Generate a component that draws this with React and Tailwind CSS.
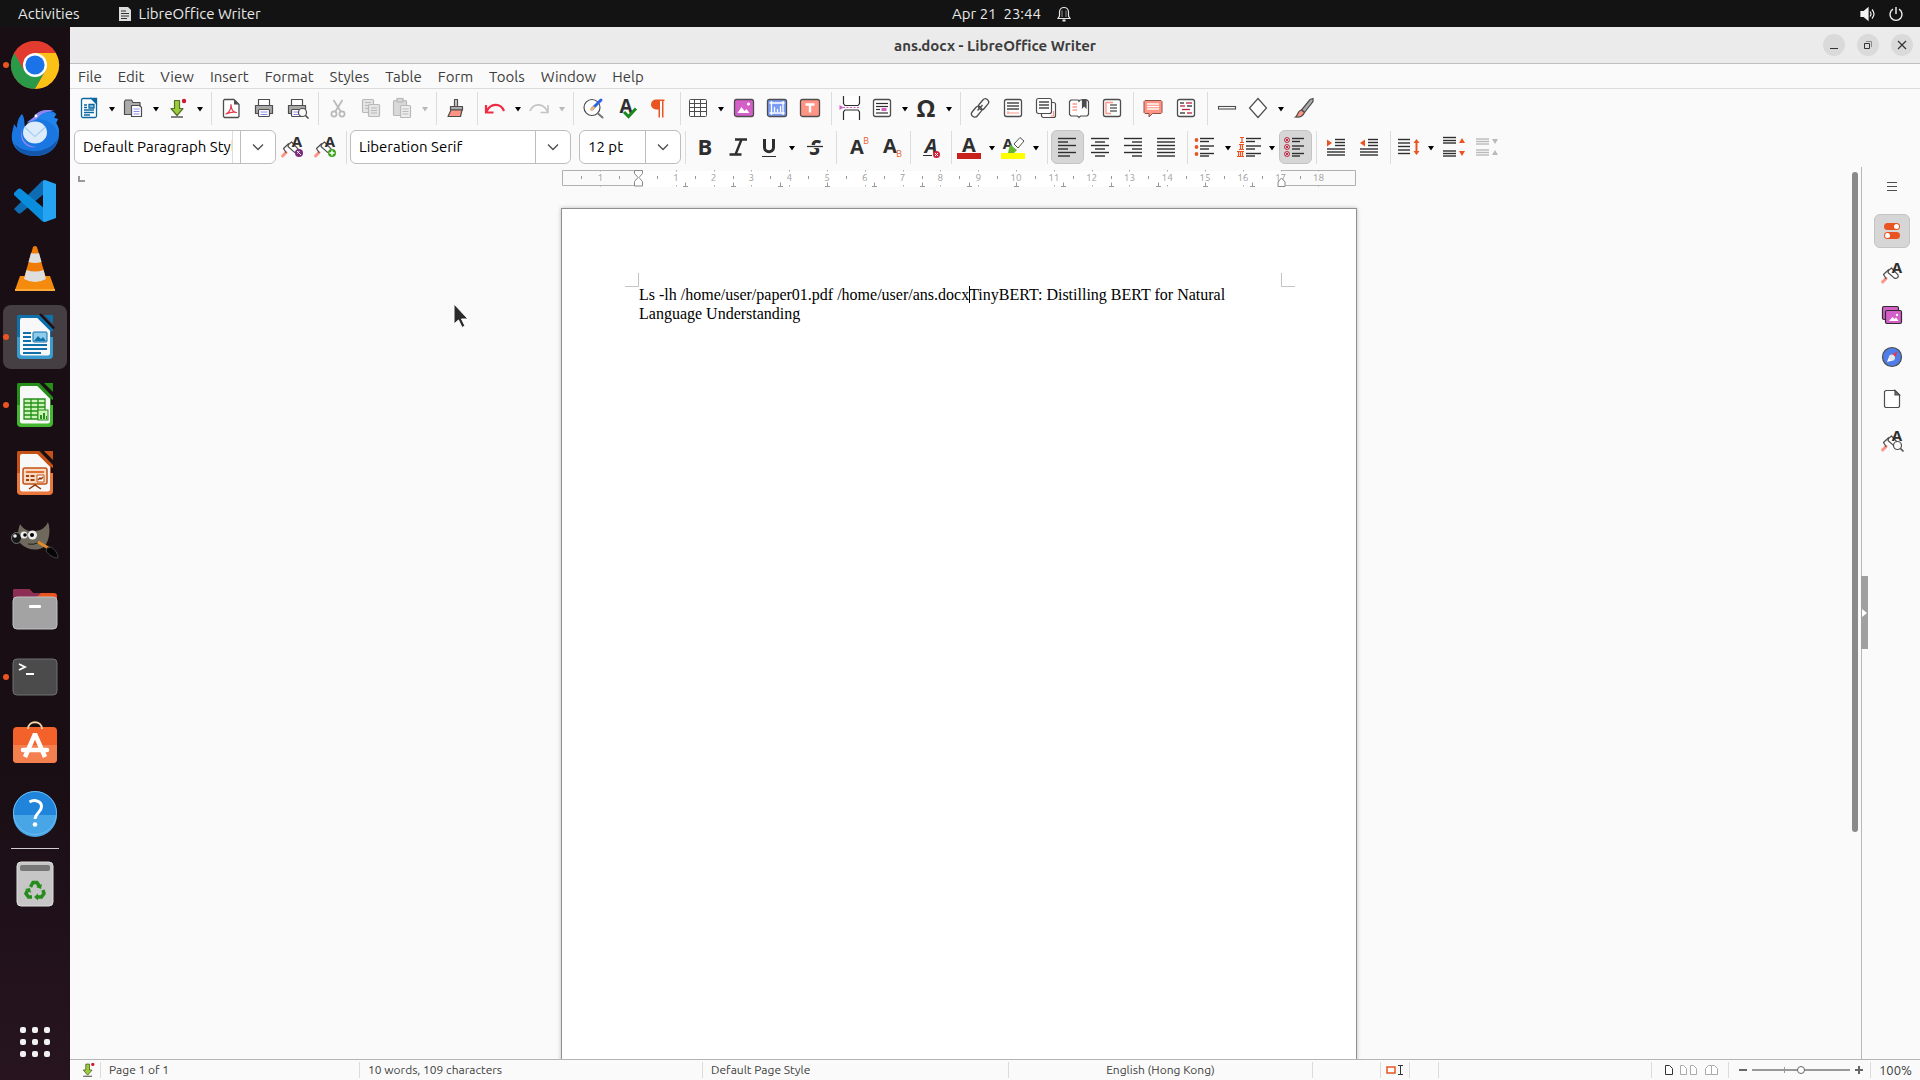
// src/App.jsx
import React, { useState } from 'react';

const MENUS = ['File', 'Edit', 'View', 'Insert', 'Format', 'Styles', 'Table', 'Form', 'Tools', 'Window', 'Help'];

const INK = '#4d4d4d';
const DARK = '#2e2e2e';
const ORANGE = '#e95420';
const SALMON = '#ff9484';
const PURPLE = '#d45fc9';
const DIM = '#b9b9b9';

function Letter({ x, y, size = 18, fill = DARK, italic, children }) {
  return (
    <text x={x} y={y} fontSize={size} fill={fill} fontWeight="bold" fontStyle={italic ? 'italic' : 'normal'} textAnchor="middle" fontFamily="Open Sans, Noto Sans, sans-serif">{children}</text>
  );
}

function Lines({ x1 = 3, x2 = 21, rows, color = DARK, width = 1.4 }) {
  return (
    <g stroke={color} strokeWidth={width}>
      {rows.map((r, i) => Array.isArray(r) ? <path key={i} d={`M${r[0]} ${r[2]}H${r[1]}`} /> : <path key={i} d={`M${x1} ${r}H${x2}`} />)}
    </g>
  );
}

const brushRoller = (
  <g fill="#fff" stroke={INK} strokeWidth="1.2" strokeLinejoin="round" strokeLinecap="round">
    <path d="M2.6 21 6 17.5" stroke={SALMON} strokeWidth="3" />
    <path d="M6 17.5 3.5 13.5 8.5 8.8 11 10" fill="none" />
    <path d="m8.5 9.5 3-2.5 6.500 6.800c1 2.500-1.500 4.200-3.700 3.300L8 11.500z" />
  </g>
);

const printer = (
  <g stroke={INK} strokeWidth="1.2" strokeLinejoin="round">
    <rect x="6.500" y="3.500" width="11" height="6" fill="#fff" />
    <path d="M3.500 9.500h17v8h-17z" fill="#a8a8a8" />
    <rect x="6.500" y="13.500" width="11" height="7" rx="1" fill="#fff" />
    <path d="M8.500 16h7M8.500 18.500h7" stroke="#8d8df0" />
  </g>
);

const magnifier = (
  <g stroke={INK} strokeWidth="1.200">
    <circle cx="17.500" cy="16.500" r="4" fill="#fafafa" />
    <path d="m20.500 19.500 3 3" strokeWidth="1.600" />
  </g>
);

const ICONS = {
  newDoc: (
    <g stroke="#0c69a0" strokeWidth="1.300" fill="none">
      <path d="M6 2.500h8.500l5 5V20a1.500 1.500 0 0 1-1.500 1.500H6A1.500 1.500 0 0 1 4.500 20V4A1.500 1.500 0 0 1 6 2.500z" fill="#fff" />
      <path d="M14.500 2.500h5v5z" fill="#0c69a0" />
      <path d="M7 9h3M7 11.500h3M7 14h10M7 16.500h10M7 19h6" />
      <path d="M12 8.500h5v3.500h-5z" fill="#7ec2e8" />
    </g>
  ),
  open: (
    <g stroke={INK} strokeWidth="1.200" strokeLinejoin="round">
      <path d="M3.500 18.500V5.500l1-1.500h6l1.500 2.500h7v12z" fill="#ababab" />
      <path d="M10.500 9.500h8l2 2v9h-10z" fill="#fff" />
      <path d="M12.500 13h6M12.500 15.500h6M12.500 18h6" stroke="#8d8df0" />
    </g>
  ),
  save: (
    <g>
      <path d="M9.500 4.500h5v8h3.500l-6 7-6-7h3.500z" fill="#9ccb3b" stroke="#56702a" strokeWidth="1.200" strokeLinejoin="round" />
      <path d="M6 21h12" stroke={INK} strokeWidth="1.400" />
      <circle cx="19" cy="5" r="2.200" fill="#d3172e" />
    </g>
  ),
  pdf: (
    <g fill="none" strokeLinejoin="round">
      <path d="M5.500 3.500h9.500l5 5v12l-1 1h-13.500l-1-1v-16z" fill="#fff" stroke={INK} strokeWidth="1.300" />
      <path d="M15 3.500l5 5h-5z" fill={INK} />
      <path d="M7 18c3-1.500 5-5 5-9.500 0 5 2 7.500 5.500 8-3-.700-7 0-10.500 1.500z" stroke="#e53950" strokeWidth="1.200" />
    </g>
  ),
  print: printer,
  preview: <g>{printer}{magnifier}</g>,
  cut: (
    <g stroke={DIM} strokeWidth="1.700" fill="none">
      <path d="M7.500 4 15 16M16.500 4 9 16" />
      <circle cx="8" cy="18" r="2.600" /><circle cx="16" cy="18" r="2.600" />
    </g>
  ),
  copy: (
    <g stroke={DIM} strokeWidth="1.200" fill="#e4e4e4">
      <rect x="3.500" y="3.500" width="11" height="13" rx="1" /><path d="M6 6.500h6M6 9.500h4M6 12.500h3" />
      <rect x="9.500" y="8.500" width="11" height="12" rx="1" /><path d="M12 12h6M12 14.500h6M12 17h6" />
    </g>
  ),
  paste: (
    <g stroke={DIM} strokeWidth="1.200" fill="#d9d9d9">
      <rect x="3.500" y="4.500" width="13" height="15" rx="1" /><rect x="7" y="2.500" width="6" height="3.500" />
      <rect x="10.500" y="9.500" width="10" height="12" rx="1" fill="#ececec" /><path d="M12.500 13h6M12.500 15.500h6M12.500 18h6" />
    </g>
  ),
  clone: (
    <g stroke={INK} strokeWidth="1.200" strokeLinejoin="round">
      <path d="M10.500 3.500h3v7h-3z" fill="#ccc" />
      <path d="M6.500 10.500h12v3.500h-12z" fill="#ababab" />
      <path d="M7 14h11l-1.500 6.500H4z" fill={SALMON} />
    </g>
  ),
  undo: <path d="M3 9v7.500h7.500M3.500 15.500c4-8.500 14-9 17.500-.500" fill="none" stroke="#ee2c45" strokeWidth="2.200" />,
  redo: <path d="M21 9v7.500h-7.500M20.500 15.500c-4-8.500-14-9-17.500-.500" fill="none" stroke="#c4c4c4" strokeWidth="1.600" />,
  find: (
    <g strokeLinecap="round">
      <circle cx="11" cy="11.500" r="8" fill="#fff" stroke={INK} strokeWidth="1.200" />
      <path d="m17 17.500 4.500 4" stroke="#777" strokeWidth="2" />
      <path d="M11 13 20 4" stroke="#2f62e0" strokeWidth="3" />
      <path d="m10.500 13.500 2-2" stroke="#f7b86a" strokeWidth="2.500" />
    </g>
  ),
  spell: <g><Letter x={12} y={17} size={19}>A</Letter><path d="m10 16 4.500 4.500 7.500-8" fill="none" stroke="#198a1f" strokeWidth="3" /></g>,
  pilcrow: <path d="M18.500 3.500H10a5 5 0 0 0 0 10h2.500v8h1.500v-16.500h2v16.500h1.500v-16.500h1z" fill={ORANGE} transform="translate(-1 0)" />,
  table: (
    <g stroke={INK} strokeWidth="1" fill="#fff">
      <rect x="3.500" y="3.500" width="17" height="17" rx="1" />
      <path d="M3.500 7.500h17M3.500 11.500h17M3.500 15.500h17M8.500 3.500v17M14.500 3.500v17" />
    </g>
  ),
  image: (
    <g>
      <rect x="2.500" y="3.500" width="19" height="17" rx="2" fill={PURPLE} stroke={INK} strokeWidth="1.300" />
      <path d="m5.500 17 4-6 3 4 2-2 3 4z" fill="#fff" /><circle cx="16.500" cy="8" r="1.600" fill="#fff" />
    </g>
  ),
  chart: (
    <g>
      <rect x="2.500" y="3.500" width="19" height="17" rx="2" fill="#7a9cf5" stroke={INK} strokeWidth="1.300" />
      <path d="M6.500 5v14M4.500 17h15M4.500 7h15M18 5v14M9.500 16v-5M12.500 16v-3M15.500 16v-6" stroke="#fff" strokeWidth="1.300" />
    </g>
  ),
  textBox: (
    <g>
      <rect x="2.500" y="3.500" width="19" height="17" rx="2" fill={SALMON} stroke={INK} strokeWidth="1.300" />
      <path d="M7.500 8.500h9M12 8.500v8" stroke="#fff" strokeWidth="2.400" />
    </g>
  ),
  pageBreak: (
    <g fill="#fff" stroke={DARK} strokeWidth="1.200">
      <path d="M4.500 0v7.500l1.500 2h13l1.500-2V0M4.500 24v-8l1.500-2h13l1.500 2v8" />
      <path d="M4 11.500h17" stroke={PURPLE} strokeDasharray="2 1.500" /><path d="m.500 9 4 2.500-4 2.500z" fill={PURPLE} stroke="none" />
    </g>
  ),
  field: (
    <g>
      <rect x="3.500" y="3.500" width="17" height="17" rx="2" fill="#fff" stroke={INK} strokeWidth="1.300" />
      <Lines rows={[[6, 18, 7.500], [6, 18, 10.500], [6, 10, 13.500], [6, 18, 17]]} width={1.200} />
      <path d="M11.500 12h5v3h-5z" fill={PURPLE} />
    </g>
  ),
  omega: <Letter x={12} y={21} size={24}>Ω</Letter>,
  link: (
    <g fill="none" stroke={INK} strokeWidth="1.300">
      <rect x="9.500" y="5" width="12" height="6.500" rx="3.200" transform="rotate(-50 15.500 8.200)" />
      <rect x="2.500" y="12.500" width="12" height="6.500" rx="3.200" transform="rotate(-50 8.500 15.700)" />
      <path d="m9.500 14.500 5-5.500" />
    </g>
  ),
  footnote: (
    <g>
      <rect x="3.500" y="3.500" width="17" height="17" rx="2" fill="#fff" stroke={INK} strokeWidth="1.300" />
      <Lines x1={6} x2={18} rows={[7, 10, 13]} width={1.300} /><path d="M7 15v3M6 17h12" stroke={SALMON} />
    </g>
  ),
  endnote: (
    <g fill="#fff" stroke={INK} strokeWidth="1.200">
      <rect x="7.500" y="6.500" width="14" height="15" rx="2" /><rect x="2.500" y="2.500" width="15" height="15" rx="2" />
      <Lines x1={5} x2={15} rows={[6, 9, 12]} width={1.300} /><path d="M19.500 15v5h-3" stroke={SALMON} fill="none" />
    </g>
  ),
  bookmark: (
    <g fill="#fff" stroke={INK} strokeWidth="1.200">
      <path d="M2.500 5.500 4 4h7l1 1.500L13 4h7l1.500 1.500v13L20 20h-6.500l-1.500 1.500-1.500-1.500H4l-1.500-1.500z" />
      <path d="M15.500 3.500h3.500v8l-1.700-2-1.800 2z" fill={INK} />
      <Lines x1={5.500} x2={10} rows={[8, 11, 14]} color={SALMON} />
    </g>
  ),
  crossRef: (
    <g>
      <rect x="3.500" y="3.500" width="17" height="17" rx="2" fill="#fff" stroke={INK} strokeWidth="1.300" />
      <Lines rows={[[10, 17, 9], [10, 17, 12], [10, 17, 15]]} width={1.100} /><path d="M13 6.500H6v11h5" fill="none" stroke={SALMON} strokeWidth="1.300" />
    </g>
  ),
  comment: (
    <g>
      <path d="M4 4.500h16l1 1v11l-1 1h-8.500l-3.500 3.500V17.500H4l-1-1v-11z" fill={SALMON} stroke="#8d5149" />
      <Lines x1={6} x2={18} rows={[8, 10.500, 13]} color="#fff" />
    </g>
  ),
  track: (
    <g>
      <rect x="3.500" y="3.500" width="17" height="17" rx="2" fill="#fff" stroke={INK} strokeWidth="1.300" />
      <Lines rows={[[6, 10, 7], [13, 18, 10], [6, 11, 17]]} width={1.300} /><Lines rows={[[12, 18, 7], [6, 11, 10], [8, 16, 13.500], [13, 18, 17]]} color="#c0203a" width={1.300} />
    </g>
  ),
  line: <rect x="3.500" y="10.500" width="17" height="2.500" fill="#fff" stroke={INK} strokeWidth="1.100" />,
  shape: <path d="m12 2.500 8.500 9.500-8.500 9.500L3.500 12z" fill="#fff" stroke={INK} strokeWidth="1.200" />,
  draw: (
    <g stroke={INK} strokeWidth="1.200">
      <path d="M9.500 14 18 3.500l3-1v3L12.500 16.500z" fill="#aaa" />
      <path d="M9.500 14l3 2.500c-1.500 3.500-5 5-9 4.500 2.500-1.500 2-6.500 6-7z" fill={SALMON} />
    </g>
  ),
  styleUpdate: <g>{brushRoller}<Letter x={17} y={12} size={15}>A</Letter><circle cx="19" cy="18" r="4" fill="#7b2a7e" /><path d="m17 16 4 4M17.500 18.500l2-2.500" stroke="#fff" /></g>,
  styleNew: <g>{brushRoller}<Letter x={17} y={12} size={15}>A</Letter><circle cx="19" cy="18" r="4" fill="#3fa01f" /><path d="M16.500 18h5M19 15.500v5" stroke="#fff" strokeWidth="1.400" /></g>,
  styles: <g>{brushRoller}<Letter x={17} y={12} size={15}>A</Letter></g>,
  inspector: <g>{brushRoller}<Letter x={17} y={12} size={15}>A</Letter>{magnifier}</g>,
  bold: <Letter x={12} y={20} size={22}>B</Letter>,
  italic: <path d="M9 4.500h12M3.500 19.500h12M15.500 4.500l-6 15" stroke={DARK} strokeWidth="2.400" />,
  underline: <g><path d="M7.500 4v8.500c0 5.500 9 5.500 9 0V4" stroke={DARK} strokeWidth="3" fill="none" /><path d="M5 21.500h14" stroke={DARK} /></g>,
  strike: <g><Letter x={12} y={19.500} size={21} italic>S</Letter><path d="M4 11.500h16" stroke="#fafafa" strokeWidth="3" /><path d="M4 11.500h16" stroke={DARK} strokeWidth="1.300" /></g>,
  superscript: <g><Letter x={13} y={19} size={20}>A</Letter><text x="22" y="9" fontSize="9" fill={ORANGE} textAnchor="middle">B</text></g>,
  subscript: <g><Letter x={13} y={18} size={20}>A</Letter><text x="22" y="22" fontSize="9" fill={ORANGE} textAnchor="middle">B</text></g>,
  clear: <g><Letter x={13} y={18} size={20} italic>A</Letter><path d="M5 20.500h9" stroke={DARK} /><circle cx="18.500" cy="19.500" r="3.500" fill="#d3213c" /><path d="m17 18 3 3m0-3-3 3" stroke="#fff" /></g>,
  fontColor: <g><Letter x={12} y={17} size={20}>A</Letter><path d="M0 18h24v6H0z" fill="#c9211e" /></g>,
  highlight: (
    <g>
      <Letter x={7} y={14} size={15}>A</Letter>
      <path d="m13 9 6-6.500 4 3.500-6 7z" fill="#fff" stroke={INK} /><path d="m9 9.500 7 5.500-3 3H7z" fill="#69b52d" />
      <path d="M0 18h24v6H0z" fill="#ff0" />
    </g>
  ),
  left: <Lines rows={[[3, 21, 3.500], [3, 13, 7], [3, 21, 10.500], [3, 13, 14], [3, 21, 17.500], [3, 15, 21]]} />,
  center: <Lines rows={[[3, 21, 3.500], [7, 17, 7], [3, 21, 10.500], [7, 17, 14], [3, 21, 17.500], [7, 17, 21]]} />,
  right: <Lines rows={[[3, 21, 3.500], [11, 21, 7], [3, 21, 10.500], [11, 21, 14], [3, 21, 17.500], [11, 21, 21]]} />,
  justify: <Lines rows={[3.500, 7, 10.500, 14, 17.500, 21]} />,
  bullets: (
    <g fill={ORANGE}>
      <Lines rows={[[7, 21, 3.500], [7, 16, 6.500], [7, 21, 11], [7, 16, 14], [7, 21, 18.500], [7, 16, 21]]} />
      <circle cx="3.500" cy="5" r="1.900" /><circle cx="3.500" cy="12" r="1.900" /><circle cx="3.500" cy="19" r="1.900" />
    </g>
  ),
  numbers: (
    <g>
      <Lines rows={[[9, 24, 3.500], [9, 18, 6.500], [9, 24, 11], [9, 18, 14], [9, 24, 18.500], [9, 18, 21]]} />
      <path d="M3 2.500h4M3 7.500h4M5 2.500v5M2 9.500h5M2 14.500h5M3.500 9.500v5M5.500 9.500v5M0 16.500h7M0 21.500h7M1.500 16.500v5M3.500 16.500v5M5.500 16.500v5" stroke={ORANGE} strokeWidth="1.200" />
    </g>
  ),
  noList: (
    <g fill="none">
      <Lines rows={[[9, 21, 3.500], [9, 17, 6.500], [9, 21, 11], [9, 17, 14], [9, 21, 18.500], [9, 17, 21]]} />
      <g stroke="#c0304a"><circle cx="4" cy="5" r="2.500" /><circle cx="4" cy="12" r="2.500" /><circle cx="4" cy="19" r="2.500" /><path d="m2.500 3.500 3 3m0-3-3 3m0 4 3 3m0-3-3 3m0 4 3 3m0-3-3 3" /></g>
    </g>
  ),
  indentMore: <g><Lines rows={[[11, 21, 4.500], [11, 21, 7.500], [11, 21, 10.500], [3, 21, 14], [3, 21, 17], [3, 21, 20]]} /><path d="m3 4.500 5 3.500-5 3.500z" fill={ORANGE} /></g>,
  indentLess: <g><Lines rows={[[11, 21, 4.500], [11, 21, 7.500], [11, 21, 10.500], [3, 21, 14], [3, 21, 17], [3, 21, 20]]} /><path d="m8 4.500-5 3.500 5 3.500z" fill={ORANGE} /></g>,
  spacing: <g><Lines x1={2} x2={14} rows={[4.500, 8, 11.500, 15, 18.500]} /><path d="m20.500 4-3 4h2v8h-2l3 4 3-4h-2V8h2z" fill={ORANGE} /></g>,
  spaceMore: <g><Lines x1={1} x2={14} rows={[2.500, 5.500, 8, 16, 18.500, 21]} /><path d="m20 3-3 5h6zM20 21l-3-5h6z" fill={ORANGE} /></g>,
  spaceLess: <g><Lines x1={1} x2={14} rows={[4, 6.500, 9, 15, 17.500, 20]} color={DIM} /><path d="m20 9-3-5h6zM20 15l-3 5h6z" fill={DIM} /></g>,
  hamburger: <Lines x1={7} x2={17} rows={[7.500, 11.500, 15.500]} color={INK} width={1} />,
  properties: (
    <g>
      <rect x="4" y="4" width="16" height="7" rx="3.500" fill={ORANGE} /><circle cx="16.500" cy="7.500" r="2.500" fill="#fff" />
      <rect x="4" y="13" width="16" height="7" rx="3.500" fill={ORANGE} /><circle cx="7.500" cy="16.500" r="2.500" fill="#fff" />
    </g>
  ),
  gallery: (
    <g stroke={DARK} strokeWidth="1.200">
      <rect x="2.500" y="3.500" width="16" height="13" rx="1.500" fill={PURPLE} /><rect x="5.500" y="7.500" width="16" height="13" rx="1.500" fill={PURPLE} />
      <path d="m9 18 3.500-4 2 2 1.500-1.500 2.500 3.500z" fill="#fff" stroke="none" /><circle cx="17" cy="12" r="1.200" fill="#fff" stroke="none" />
    </g>
  ),
  navigator: (
    <g>
      <circle cx="12" cy="12" r="9.500" fill="#4f7de9" stroke={INK} strokeWidth="1.200" />
      <path d="m7 17 2.500-6.500 5 4.500z" fill="#fff" /><circle cx="12" cy="12.500" r="3" fill="#e4e4ea" /><path d="m17.500 6.500-5 2.500 3 3z" fill="#e53950" />
    </g>
  ),
  page: <g stroke={INK} strokeWidth="1.200"><path d="M6 3.500h9l4.500 4.500v11.500l-1 1H5.500l-1-1V4.500z" fill="#fff" /><path d="M15 3.500V8h4.500z" fill="#777" /></g>,
};

function Icon({ name }) {
  return <svg viewBox="0 0 24 24" className="w-6 h-6 shrink-0 overflow-visible" aria-hidden="true">{ICONS[name]}</svg>;
}

// items: 'name' is a plain button, 'name+' has a drop-down arrow, '|' is a separator
const STANDARD = ['newDoc+', 'open+', 'save+', '|', 'pdf', 'print', 'preview', '|', 'cut', 'copy', 'paste+', '|', 'clone', '|', 'undo+', 'redo+', '|', 'find', 'spell', 'pilcrow', '|', 'table+', 'image', 'chart', 'textBox', '|', 'pageBreak', 'field+', 'omega+', '|', 'link', 'footnote', 'endnote', 'bookmark', 'crossRef', '|', 'comment', 'track', '|', 'line', 'shape+', 'draw'];
const FORMATTING = ['|', 'bold', 'italic', 'underline+', 'strike', '|', 'superscript', 'subscript', '|', 'clear', '|', 'fontColor+', 'highlight+', '|', 'left', 'center', 'right', 'justify', '|', 'bullets+', 'numbers+', 'noList', '|', 'indentMore', 'indentLess', '|', 'spacing+', 'spaceMore', 'spaceLess'];
const PRESSED = ['left', 'noList'];
const DISABLED = ['paste', 'redo'];

function Separator() {
  return <span className="flex w-2 h-[33px] shrink-0 justify-center"><span className="w-px bg-[#dcdcdc]" /></span>;
}

function ToolItems({ items }) {
  return items.map((item, i) => {
    if (item === '|') return <Separator key={i} />;
    const drop = item.endsWith('+');
    const name = item.replace('+', '');
    if (!drop) {
      return (
        <button key={i} type="button" aria-label={name} className={`flex items-center w-[33px] h-[34px] shrink-0 rounded-md ${PRESSED.includes(name) ? 'pl-[3px] border border-[#c4c4c4] bg-[#d6d6d6]' : 'pl-1'}`}>
          <Icon name={name} />
        </button>
      );
    }
    return (
      <React.Fragment key={i}>
        <button type="button" aria-label={name} className="flex items-center w-[29px] h-[34px] shrink-0 pl-[2px]"><Icon name={name} /></button>
        <button type="button" aria-label={`${name} options`} className="flex items-center w-[15px] h-[34px] shrink-0 pl-1 pt-[3px]">
          <svg viewBox="0 0 8 5" className="w-[8px] h-[5px]"><path d="M1 0h6L4 4.500z" fill={DISABLED.includes(name) ? DIM : '#000'} /></svg>
        </button>
      </React.Fragment>
    );
  });
}

function Combo({ label, initial, className, inner }) {
  const [value, setValue] = useState(initial);
  return (
    <div className={`flex h-[34px] shrink-0 rounded-md border border-[#bdbdbd] bg-white overflow-hidden ${className}`}>
      <div className="flex flex-1 min-w-0">
        <input aria-label={label} value={value} onChange={e => setValue(e.target.value)} className={`w-full min-w-0 pl-2 text-[15px] text-black outline-none ${inner ? 'mr-[7px] border-r border-[#dcdcdc]' : ''}`} />
      </div>
      <button type="button" aria-label={`${label} list`} className="flex items-center justify-center w-[35px] border-l border-[#bdbdbd]">
        <svg viewBox="0 0 12 8" className="w-3 h-2"><path d="m1 1.500 5 5 5-5" fill="none" stroke={INK} strokeWidth="1.300" /></svg>
      </button>
    </div>
  );
}

function OfficeDoc({ dark, light, children }) {
  return (
    <g>
      <path d="M7 2h22l11 11v29a3 3 0 0 1-3 3H9a3 3 0 0 1-3-3V4a2 2 0 0 1 1-2z" fill={dark} />
      <path d="M6 24h36v18a4 4 0 0 1-4 4H10a4 4 0 0 1-4-4z" fill={light} />
      <path d="M11 5h15.500L39 17.500V40a2.500 2.500 0 0 1-2.500 2.500h-25A2.500 2.500 0 0 1 9 40V7a2 2 0 0 1 2-2z" fill="#f8f8f8" />
      <path d="M26.500 5 39 17.500 42 19V15L30 2h-4z" fill={dark} />
      <path d="M29 1 43 15.500" stroke="#1b1016" strokeWidth="2.500" />
      <path d="M33 2h9v9z" fill={dark} />
      {children}
    </g>
  );
}

const DOCK = [
  {
    name: 'Google Chrome', running: true, art: (
      <g>
        <circle cx="24" cy="24" r="24" fill="#e33b2e" />
        <path d="M3.200 12A24 24 0 0 0 24 48l10.400-18L24 24z" fill="#2a9a48" />
        <path d="M44.800 12H24l10.400 18L24 48A24 24 0 0 0 44.800 12z" fill="#fbc116" />
        <path d="M3.200 12A24 24 0 0 1 44.800 12H24L13.600 30z" fill="#e33b2e" />
        <circle cx="24" cy="24" r="12" fill="#fff" /><circle cx="24" cy="24" r="9.600" fill="#1a73e8" />
      </g>
    ),
  },
  {
    name: 'Thunderbird', art: (
      <g>
        <path d="M2 20C-3 36 8 47 24 47c14 0 24-9 24-22 0-6-1-8-3-11l2-4-4-1 2-4c-3-5-18-5-22 3l-7 5 6 2-8 3C13 14 14 9 11 5 7 9 6 14 6 19l-3-4z" fill="#1a77e2" />
        <path d="M23 8C27 0 38 0 44 2c-7 0-14 2-18 8l-10 4z" fill="#8f86f2" />
        <path d="M26 10C31 3 38 3 45 5l-2 4 4 1-2 4c2 3 3 6 3 11-4-10-12-15-22-15z" fill="#2184ec" />
        <path d="M3 34c8 10 32 13 44-4-3 11-12 17-23 17S6 42 3 34z" fill="#1457aa" />
        <path d="M11 19c-2 11 4 18 14 19-9 2-18-6-14-19z" fill="#8f86f2" />
        <ellipse cx="24" cy="23.500" rx="12" ry="11" fill="#dcecfb" /><path d="m13 17 11 10 11-10-2 3-9 8-9-8z" fill="#8ebfee" />
        <circle cx="25" cy="7" r="1.400" fill="#fff" />
      </g>
    ),
  },
  {
    name: 'Visual Studio Code', art: (
      <g>
        <path d="m3 32 4 4q1 1 3 0L34 16V3q-2 0-3 1z" fill="#0e6cb3" />
        <path d="m3 16 4-4q1-1 3 0l24 20v13q-2 0-3-1L3 18z" fill="#0a8ddc" />
        <path d="M34 3 45 7v34l-11 4-2-1V4z" fill="#25a4f3" />
      </g>
    ),
  },
  {
    name: 'VLC', art: (
      <g>
        <path d="M9 31h30l5 14q0 1-1 1H5q-1 0-1-1z" fill="#f58b0e" /><path d="M4 44h40v2H4z" fill="#ffa93a" />
        <path d="M22 2q2-2 4 0l9 31q-11 6-22 0z" fill="#f07c07" />
        <path d="m20 8-2.500 9q6.500 2 13 0L28 8q-4 1-8 0zM15.500 25l-2.500 9q11 6 22 0l-2.500-9q-8.500 3-17 0z" fill="#dedede" />
      </g>
    ),
  },
  {
    name: 'LibreOffice Writer', running: true, active: true, art: (
      <OfficeDoc dark="#0e71ab" light="#3a9bcf">
        <path d="M12 20h8M12 24h8M12 28h8M12 32h24M12 36h24M12 40h18" stroke="#0f70aa" strokeWidth="2" />
        <rect x="22" y="19" width="14" height="10" rx="1" fill="#8fcbea" stroke="#0f70aa" /><path d="m23 28 4-5 3 3 2-2 3 4z" fill="#0f70aa" />
      </OfficeDoc>
    ),
  },
  {
    name: 'LibreOffice Calc', running: true, art: (
      <OfficeDoc dark="#258f1a" light="#45b62f">
        <path d="M13 18h21v20H13zM13 22h21M13 26h21M13 30h21M13 34h21M20 18v20M27 18v20" fill="#ccf4b7" stroke="#258f1a" strokeWidth="1.300" />
        <rect x="27" y="29" width="10" height="10" fill="#ccf4b7" stroke="#258f1a" /><path d="M29 38v-4h2v4zM32 38v-6h2v6zM35 38v-3h1v3z" fill="#258f1a" />
      </OfficeDoc>
    ),
  },
  {
    name: 'LibreOffice Impress', art: (
      <OfficeDoc dark="#c45115" light="#e8783b">
        <rect x="12" y="19" width="24" height="16" rx="2" fill="#f9dac5" stroke="#c45115" strokeWidth="1.500" />
        <path d="M15 23h18" stroke="#e07030" strokeWidth="2" /><path d="M15 27h3M19.500 27h4M15 31h3M19.500 31h4" stroke="#a33f0b" strokeWidth="2" />
        <path d="M26 26h7v7h-7z" fill="#fff" stroke="#c45115" /><path d="m27 31 2-2 1 1 2-2M24 35v2M18 40l6-4 6 4" stroke="#8f3707" strokeWidth="1.500" fill="none" />
      </OfficeDoc>
    ),
  },
  {
    name: 'GIMP', art: (
      <g>
        <path d="M9 7c4 6 9 8 15 7 6 0 11-4 13-9 3 9 1 18-3 24-7 6-18 4-24-2-5-4-3-14-1-20z" fill="#6e695c" />
        <ellipse cx="5.500" cy="21" rx="5" ry="5.500" fill="#161616" stroke="#777" /><circle cx="4" cy="19" r="1.800" fill="#eee" />
        <circle cx="13" cy="18" r="3.500" fill="#eee" /><circle cx="21.500" cy="18" r="4.500" fill="#eee" /><circle cx="14" cy="18" r="1.800" /><circle cx="21" cy="18" r="2" />
        <path d="M17 27q5 1 10-1" stroke="#222" fill="none" /><path d="m27 25 12 7" stroke="#e38b26" strokeWidth="3" /><path d="m36 31 4-1c4 3 7 6 7 11-5 0-9-3-12-7z" fill="#050505" stroke="#444" />
      </g>
    ),
  },
  {
    name: 'Files', art: (
      <g>
        <path d="M4 4h14l4 4h21q3 0 3 3v9H2V7q0-3 2-3z" fill={ORANGE} /><path d="M4 4h14l4 4h8L18 20H2V7q0-3 2-3z" fill="#8d2f55" />
        <rect x="2" y="12" width="44" height="32" rx="4" fill="#a3a3a3" stroke="#c2c2c2" /><rect x="18" y="20" width="12" height="3" rx="1" fill="#fff" />
      </g>
    ),
  },
  {
    name: 'Terminal', running: true, art: (
      <g>
        <rect x="2" y="6" width="44" height="36" rx="4" fill="#4b4b4b" stroke="#707070" />
        <path d="m8 11 6 3-6 3M15 21h8" stroke="#fff" strokeWidth="1.800" fill="none" />
      </g>
    ),
  },
  {
    name: 'Ubuntu Software', art: (
      <g>
        <rect x="2" y="6" width="44" height="36" rx="4" fill="#f2622a" /><path d="M2 24h44v14a4 4 0 0 1-4 4H6a4 4 0 0 1-4-4z" fill="#f47f4f" />
        <path d="M17 8c0-9 14-9 14 0" fill="none" stroke="#f9d3a3" strokeWidth="1.800" />
        <path d="M14 36 24 13l10 23" stroke="#fff" strokeWidth="4.500" fill="none" strokeLinejoin="bevel" />
        <path d="M12 29h24" stroke="#fff" strokeWidth="4.500" strokeLinecap="round" />
      </g>
    ),
  },
  {
    name: 'Help', art: (
      <g>
        <circle cx="24" cy="24" r="22" fill="#1f84da" /><path d="M2 26a22 22 0 0 0 44 0z" fill="#49a6e6" /><circle cx="24" cy="24" r="21.500" fill="none" stroke="#6bbcf0" />
        <path d="M18.500 13c5-3 12-1 12 4.500 0 6-6.500 6.500-6.500 12.500" stroke="#fff" strokeWidth="3" fill="none" /><circle cx="24" cy="35.500" r="2.300" fill="#fff" />
      </g>
    ),
  },
];

function DockItem({ item }) {
  return (
    <button type="button" aria-label={item.name} className={`relative flex items-center justify-center w-16 h-16 shrink-0 rounded-lg ${item.active ? 'bg-[#453e43]' : ''}`}>
      {item.running && <span className="absolute left-0 top-[29px] w-[6px] h-[6px] rounded-full bg-[#e95420]" />}
      <svg viewBox="0 0 48 48" className="w-12 h-12 overflow-visible" aria-hidden="true">{item.art}</svg>
    </button>
  );
}

const TRASH = {
  name: 'Trash', art: (
    <g>
      <rect x="6" y="2" width="36" height="44" rx="4" fill="#c6c6c6" stroke="#dedede" /><rect x="9" y="5" width="30" height="6" rx="2" fill="#777" />
      <g fill="none" stroke="#268c1c" strokeWidth="3.500">
        <path d="m19.500 27 2.500-4.500h4l2.500 4M32 30l1 3.500-2.500 3.500H27M21 37h-3.500l-2.500-3.500 1.500-3" />
      </g>
      <path d="m31 24-1 5-5-2zM27 33.500v7l-4-3.500zM14 29l5-1 1 5z" fill="#268c1c" />
    </g>
  ),
};

function Dock() {
  return (
    <nav aria-label="Dock" className="flex flex-col items-center w-[70px] shrink-0 pt-[6px] pb-[6px] bg-linear-to-b from-[#190e14] from-70% to-[#27141f]">
      <div className="flex flex-col gap-1">{DOCK.map(item => <DockItem key={item.name} item={item} />)}</div>
      <hr className="w-12 mt-[3px] mb-[3px] border-t border-[#d0cdce]" />
      <DockItem item={TRASH} />
      <button type="button" aria-label="Show Applications" className="grid grid-cols-3 gap-[6px] p-[17px] mt-auto">
        {Array.from({ length: 9 }, (_, i) => <span key={i} className="w-[6px] h-[6px] rounded-[2px] bg-[#f2f2f2]" />)}
      </button>
    </nav>
  );
}

function TopBar() {
  return (
    <header className="grid grid-cols-[952fr_968fr] items-center h-[27px] shrink-0 bg-[#131313] text-[#e8e8e8] text-[15px] leading-5">
      <div className="flex items-center gap-2 pl-[18px]">
        <button type="button" className="mr-[31px]">Activities</button>
        <svg viewBox="0 0 12 14" className="w-3 h-[14px]"><path d="M0 0h9l3 3v11H0z" fill="#ddd" /><path d="M2 4h5M2 6.500h8M2 9h8M2 11.500h6" stroke="#333" /></svg>
        <button type="button">LibreOffice Writer</button>
      </div>
      <div className="flex items-center justify-between pr-4">
        <button type="button" className="flex items-center gap-4 whitespace-pre">
          Apr 21  23:44
          <svg viewBox="0 0 14 16" className="w-[14px] h-4" fill="none" stroke="#e8e8e8" strokeWidth="1.200"><path d="M1 12.500h12L11.500 10V6c0-6-9-6-9 0v4z" /><path d="M5 4.500v6.500M9 4.500v6.500" strokeWidth=".600" /><path d="M5.500 14.500h3" strokeWidth="2" /></svg>
        </button>
        <button type="button" aria-label="System menu" className="flex items-center gap-3">
          <svg viewBox="0 0 16 16" className="w-4 h-4" fill="none" stroke="#f2f2f2" strokeWidth="1.200"><path d="M1 5.500h3L8 2v12l-4-3.500H1z" fill="#f2f2f2" /><path d="M10 5.500q2 2.500 0 5M12 3.500q4 4.500 0 9" /></svg>
          <svg viewBox="0 0 16 16" className="w-4 h-4" fill="none" stroke="#f2f2f2" strokeWidth="1.400"><path d="M5 3.200a6 6 0 1 0 6 0M8 1v7" /></svg>
        </button>
      </div>
    </header>
  );
}

function TitleBar() {
  const round = 'flex items-center justify-center w-[22px] h-[22px] rounded-full bg-[#dadada]';
  return (
    <div className="grid grid-cols-[1fr_auto_1fr] items-center h-[37px] shrink-0 bg-[#ebebeb] border-b border-[#bfbfbf]">
      <span />
      <h1 className="pt-[2px] text-[15px] leading-5 font-bold text-[#3d3d3d]">ans.docx - LibreOffice Writer</h1>
      <div className="flex justify-end gap-3 pr-[7px]">
        <button type="button" aria-label="Minimize" className={round}><svg viewBox="0 0 10 10" className="w-[10px] h-[10px]"><path d="M1 8.500h8" stroke="#333" /></svg></button>
        <button type="button" aria-label="Restore" className={round}><svg viewBox="0 0 10 10" className="w-[10px] h-[10px]" fill="none"><path d="M3 1.500h5.500V7" stroke="#888" /><path d="M1.500 3.500h5v5h-5z" stroke="#333" /></svg></button>
        <button type="button" aria-label="Close" className={round}><svg viewBox="0 0 10 10" className="w-[10px] h-[10px]"><path d="m1 1 8 8m0-8L1 9" stroke="#333" strokeWidth="1.200" /></svg></button>
      </div>
    </div>
  );
}

const CM = 37.8;
const ZERO = 77;

function Ruler() {
  const halves = Array.from({ length: 40 }, (_, i) => (i - 3) / 2).filter(n => n !== 0 && n < 19);
  return (
    <svg viewBox="0 0 796 18" className="w-[796px] h-[18px] overflow-visible" aria-label="Ruler">
      <rect x={ZERO} y="1" width={17 * CM} height="16" fill="#fff" />
      <path d="M77.500 .500h-76v15h76M720.500 .500h74v15h-74" fill="none" stroke="#b0b0b0" />
      {halves.map(n => Number.isInteger(n) ? (
        <g key={n}>
          <text x={ZERO + n * CM} y="11" fontSize="10" textAnchor="middle" fill="#a0a0a0">{Math.abs(n)}</text>
          <path d={`M${Math.round(ZERO + n * CM)}.500 0v1.500M${Math.round(ZERO + n * CM)}.500 15v1.500`} stroke="#aaa" />
        </g>
      ) : <path key={n} d={`M${Math.round(ZERO + n * CM)}.500 6v3`} stroke="#999" />)}
      {Array.from({ length: 13 }, (_, i) => <path key={i} d={`M${Math.round(ZERO + (i + 1) * 1.25 * CM) - 2} 16.500h5m-2.500 0v-4`} stroke="#999" fill="none" />)}
      <path d="M73.500 .500h8v3l-3.500 4 3.500 4v4.500h-8v-4.500l3.500-4-3.500-4z" fill="#fff" stroke="#888" />
      <path d="M720.500 8l3.500 4v4.500h-7V12z" fill="#fff" stroke="#888" />
    </svg>
  );
}

function Document() {
  return (
    <main className="relative flex-1 min-w-0 min-h-0 overflow-hidden pt-[3px]">
      <div className="grid grid-cols-[1fr_auto_1fr]">
        <span className="w-[7px] h-[6px] ml-2 mt-[6px] border-l-2 border-b-2 border-[#999]" />
        <Ruler />
        <span />
      </div>
      <article className="relative mx-auto mt-5 w-[796px] h-[1123px] bg-white border border-[#8f8f8f] py-[76px] pl-[77px] pr-[75px] shadow-[0_0_4px_rgba(0,0,0,0.25)]">
        <span className="absolute left-[63px] top-16 w-[14px] h-[14px] border-r border-b border-[#c4c4c4]" />
        <span className="absolute right-[61px] top-16 w-[14px] h-[14px] border-l border-b border-[#c4c4c4]" />
        <p className="font-['Liberation_Serif',serif] text-[16px] leading-[19px] text-black">
          <span>Ls -lh /home/user/paper01.pdf /home/user/ans.docx</span><span className="inline-block w-px h-[17px] -mr-px align-text-bottom bg-black" /><span>TinyBERT: Distilling BERT for Natural</span><br />
          <span>Language Understanding</span>
        </p>
      </article>
      <svg viewBox="0 0 16 26" className="absolute left-[383px] top-[136px] w-4 h-[26px]" aria-hidden="true">
        <path d="M1 1v20l4.500-4 3.500 7.500 3-1.500-3.500-7H15z" fill="#2b2b2b" stroke="#fff" />
      </svg>
    </main>
  );
}

function Sidebar() {
  const decks = ['properties', 'styles', 'gallery', 'navigator', 'page', 'inspector'];
  const [deck, setDeck] = useState('properties');
  return (
    <aside className="relative flex flex-col items-center gap-2 w-[59px] shrink-0 border-l border-[#b8b8b8] pt-[3px] pl-[2px]">
      <button type="button" aria-label="Sidebar settings" className="flex items-center justify-center w-9 h-[34px] mb-[2px]"><Icon name="hamburger" /></button>
      {decks.map(d => (
        <button key={d} type="button" aria-label={d} onClick={() => setDeck(d)} className={`flex items-center justify-center w-9 h-[34px] rounded-md border ${deck === d ? 'bg-[#d6d6d6] border-[#c4c4c4]' : 'border-transparent'}`}><Icon name={d} /></button>
      ))}
      <button type="button" aria-label="Hide sidebar" className="absolute -left-px top-[409px] flex items-center w-[7px] h-[73px] bg-[#a0a0a0]">
        <svg viewBox="0 0 7 8" className="w-[7px] h-2"><path d="m1 0 5 4-5 4z" fill="#fff" /></svg>
      </button>
    </aside>
  );
}

function StatusBar() {
  const [zoom, setZoom] = useState(100);
  const cell = 'flex items-center h-4 shrink-0 border-r border-[#dcdcdc]';
  return (
    <footer className="flex items-center h-[21px] shrink-0 border-t border-[#b4b4b4] text-[12px] leading-4 text-[#3d3d3d]">
      <div className={`${cell} w-[31px] pl-[11px]`}><svg viewBox="3 3 19 19" className="w-[14px] h-[14px]">{ICONS.save}</svg></div>
      <div className={`${cell} w-[259px] pl-2`}>Page 1 of 1</div>
      <div className={`${cell} w-[343px] pl-2`}>10 words, 109 characters</div>
      <div className={`${cell} w-[306px] pl-2`}>Default Page Style</div>
      <div className={`${cell} w-[304px] justify-center`}>English (Hong Kong)</div>
      <div className={`${cell} w-[68px]`} />
      <div className={`${cell} w-[29px] justify-center`}>
        <svg viewBox="0 0 18 10" className="w-[18px] h-[10px]" fill="none"><rect x="1" y="2" width="8" height="6" stroke={ORANGE} strokeWidth="1.500" /><path d="M12 .500h5M12 9.500h5M14.500 .500v9" stroke="#333" /></svg>
      </div>
      <div className={`${cell} w-[29px]`} />
      <div className={`${cell} grow`} />
      <div className={`${cell} w-[77px] pl-3`}>
        <svg viewBox="0 0 56 12" className="w-14 h-3" fill="#fff">
          <path d="M1.500 1.500h4l3 3v6h-7z" stroke="#333" />
          <path d="M16.500 1.500h3l3 3v6h-6zM26.500 1.500h3l3 3v6h-6zM47.500 10.500v-9h3l3 3v6zh-6v-6l3-3h3" stroke="#aaa" />
        </svg>
      </div>
      <div className={`${cell} w-[142px] pl-[10px] gap-[5px]`}>
        <button type="button" aria-label="Zoom out" className="w-2 h-[2px] bg-[#666]" />
        <div className="relative flex items-center">
          <span className="absolute left-8 w-px h-[6px] bg-[#999]" />
          <input type="range" aria-label="Zoom" min="50" max="150" value={zoom} onChange={e => setZoom(Number(e.target.value))} className="relative w-[98px] h-3 appearance-none bg-transparent [&::-webkit-slider-runnable-track]:h-[2px] [&::-webkit-slider-runnable-track]:bg-[#999] [&::-webkit-slider-thumb]:appearance-none [&::-webkit-slider-thumb]:w-2 [&::-webkit-slider-thumb]:h-2 [&::-webkit-slider-thumb]:-mt-[3px] [&::-webkit-slider-thumb]:rounded-full [&::-webkit-slider-thumb]:border [&::-webkit-slider-thumb]:border-[#666] [&::-webkit-slider-thumb]:bg-white" />
        </div>
        <button type="button" aria-label="Zoom in"><svg viewBox="0 0 8 8" className="w-2 h-2"><path d="M0 4h8M4 0v8" stroke="#666" strokeWidth="2" /></svg></button>
      </div>
      <div className="w-[49px] pl-2 shrink-0 text-[13px]">100%</div>
    </footer>
  );
}

export default function App() {
  return (
    <div className="flex flex-col h-screen overflow-hidden bg-[#fafafa] font-['Ubuntu','Noto_Sans','Open_Sans',sans-serif]">
      <TopBar />
      <div className="flex flex-1 min-h-0">
        <Dock />
        <div className="flex flex-col flex-1 min-w-0">
          <TitleBar />
          <nav aria-label="Menu" className="flex items-center gap-4 h-[25px] shrink-0 pt-[2px] pl-2 border-b border-[#dcdcdc] text-[15px] leading-5 text-[#3d3d3d]">
            {MENUS.map(m => <button key={m} type="button">{m}</button>)}
          </nav>
          <div role="toolbar" aria-label="Standard" className="flex items-center h-[38px] shrink-0 pl-[5px]">
            <ToolItems items={STANDARD} />
          </div>
          <div role="toolbar" aria-label="Formatting" className="flex items-center h-[34px] shrink-0 mt-[3px] mb-[3px] pl-1">
            <Combo label="Paragraph style" initial="Default Paragraph Style" className="w-[202px]" inner />
            <ToolItems items={['styleUpdate', 'styleNew', '|']} />
            <Combo label="Font name" initial="Liberation Serif" className="w-[221px] mr-2" />
            <Combo label="Font size" initial="12 pt" className="w-[102px]" />
            <ToolItems items={FORMATTING} />
          </div>
          <div className="flex flex-1 min-h-0">
            <Document />
            <div className="flex w-[13px] shrink-0 pl-1 pt-[5px]"><div className="w-[6px] h-[74.4%] rounded-full bg-[#8a8a8a]" /></div>
            <Sidebar />
          </div>
          <StatusBar />
        </div>
      </div>
    </div>
  );
}
